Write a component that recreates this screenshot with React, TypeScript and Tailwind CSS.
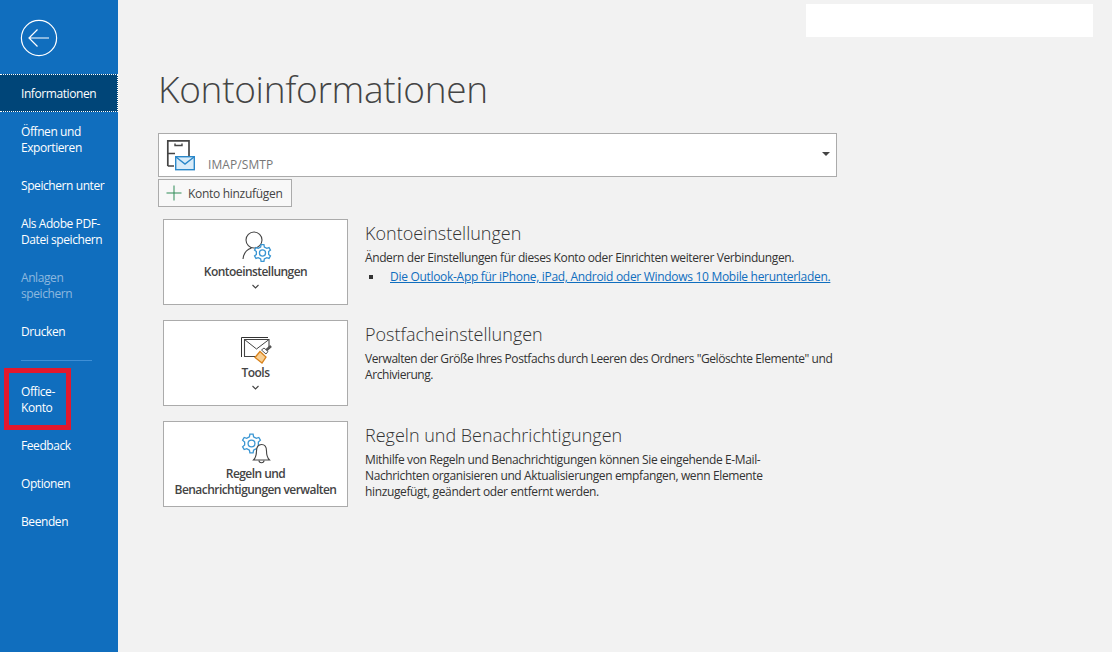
const navFont = "font-['Open_Sans',sans-serif]"

type NavItem = { lines: string[]; active?: boolean; disabled?: boolean }

const topItems: NavItem[] = [
  { lines: ["Informationen"], active: true },
  { lines: ["Öffnen und", "Exportieren"] },
  { lines: ["Speichern unter"] },
  { lines: ["Als Adobe PDF-", "Datei speichern"] },
  { lines: ["Anlagen", "speichern"], disabled: true },
  { lines: ["Drucken"] },
]

const bottomItems: NavItem[] = [
  { lines: ["Office-", "Konto"] },
  { lines: ["Feedback"] },
  { lines: ["Optionen"] },
  { lines: ["Beenden"] },
]

function NavEntry({ item }: { item: NavItem }) {
  return (
    <div
      className={`text-[12px] leading-[16px] tracking-[-0.42px] whitespace-nowrap ${
        item.active
          ? "bg-[#004578] border-y border-r border-dotted border-white pl-[21px] pr-[20px] pt-[11px] pb-[9px]"
          : "px-[21px] pt-[12px] pb-[10px]"
      } ${item.disabled ? "text-[#8db8df]" : "text-white"}`}
    >
      {item.lines.map((l) => (
        <div key={l}>{l}</div>
      ))}
    </div>
  )
}

function BackIcon() {
  return (
    <svg width="38" height="38" viewBox="0 0 38 38" fill="none" stroke="#fff" strokeWidth="1.2">
      <circle cx="19" cy="19" r="17.6" />
      <path d="M9 19H29M17.5 10.5L9 19L17.5 27.5" />
    </svg>
  )
}

function AccountIcon() {
  return (
    <svg width="30" height="34" viewBox="0 0 30 34" fill="none">
      <path d="M1.8 28V2.8H23V18M1.8 15.500H9M1.800 28H8" stroke="#444" strokeWidth="1.7" />
      <path d="M9 5.500V7.500H16V5.500" stroke="#444" strokeWidth="1.4" />
      <rect x="9.700" y="18.700" width="18.600" height="13" fill="#d9ecf9" stroke="#2b88c9" strokeWidth="1.400" />
      <path d="M9.700 18.700L19 26L28.300 18.700" stroke="#2b88c9" strokeWidth="1.400" />
    </svg>
  )
}

// six-tooth cog outline, centred on cx/cy
function gearPath(cx: number, cy: number, outer: number, inner: number) {
  const pts: string[] = []
  for (let i = 0; i < 6; i++) {
    const a = (Math.PI / 3) * i - Math.PI / 2
    const spread = [-0.3, -0.17, 0.17, 0.3]
    const radii = [inner, outer, outer, inner]
    spread.forEach((s, j) => {
      const r = radii[j]
      pts.push(`${(cx + r * Math.cos(a + s)).toFixed(2)} ${(cy + r * Math.sin(a + s)).toFixed(2)}`)
    })
  }
  return `M${pts.join("L")}Z`
}

function Gear({ cx, cy, size }: { cx: number; cy: number; size: number }) {
  return (
    <g stroke="#3a96d3" strokeWidth="1.300" fill="none">
      <path d={gearPath(cx, cy, size, size * 0.74)} />
      <circle cx={cx} cy={cy} r={size * 0.36} />
    </g>
  )
}

function UserGearIcon() {
  return (
    <svg width="32" height="32" viewBox="0 0 32 32" fill="none">
      <circle cx="14" cy="9" r="8" stroke="#444" strokeWidth="1.100" />
      <path d="M3 28C3.500 22.500 7 18.500 11.500 17" stroke="#444" strokeWidth="1.100" />
      <Gear cx={22.500} cy={22} size={8.500} />
    </svg>
  )
}

function ToolsIcon() {
  return (
    <svg width="32" height="28" viewBox="0 0 32 28" fill="none">
      <path d="M1.500 21V1.500H28" stroke="#333" strokeWidth="1" />
      <path d="M17 20.500H4.500V3.500H29V13" stroke="#444" strokeWidth="1.100" />
      <path d="M4.500 3.500L16.500 13L29 3.500" stroke="#444" strokeWidth="1" />
      <path d="M26 14.500L31 10" stroke="#555" strokeWidth="2.600" />
      <path d="M20 15.500L26 21L22 27L15 21.500Z" fill="#f8cf93" stroke="#d8811a" strokeWidth="1.300" />
      <path d="M21.500 14L24 12L28 15.500L26 18Z" fill="#fff" stroke="#555" strokeWidth="1" />
    </svg>
  )
}

function RulesIcon() {
  return (
    <svg width="32" height="34" viewBox="0 0 32 34" fill="none">
      <Gear cx={11.500} cy={12.500} size={9.500} />
      <path d="M13.500 29C15.500 27 16.500 25.500 16.500 20C16.500 16 18.500 13.500 21.500 13.500C24.500 13.500 26.500 16 26.500 20C26.500 25.500 27.500 27 29.500 29Z" fill="#fff" stroke="#444" strokeWidth="1.100" />
      <path d="M19 29.500C19 32.500 24 32.500 24 29.500" stroke="#444" strokeWidth="1.100" />
    </svg>
  )
}

function Chevron() {
  return (
    <svg width="7" height="5" viewBox="0 0 7 5" fill="none" stroke="#444" strokeWidth="1.100">
      <path d="M0.500 1L3.500 4L6.500 1" />
    </svg>
  )
}

function ActionCard({
  icon,
  label,
  chevron,
  children,
}: {
  icon: React.ReactNode
  label: string[]
  chevron?: boolean
  children: React.ReactNode
}) {
  return (
    <div className="flex">
      <div className="w-[185px] h-[86px] shrink-0 bg-white border border-[#ababab] flex flex-col items-center pt-[10px] text-[12px] leading-[16px] tracking-[-0.55px] text-[#444] font-semibold">
        <div className="h-[33px] flex items-end">{icon}</div>
        <div className="text-center whitespace-nowrap mt-[1px]">
          {label.map((l) => (
            <div key={l}>{l}</div>
          ))}
        </div>
        {chevron && (
          <div className="mt-[4px]">
            <Chevron />
          </div>
        )}
      </div>
      <div className="ml-[17px]">{children}</div>
    </div>
  )
}

function CardTitle({ children }: { children: React.ReactNode }) {
  return <div className="text-[18px] leading-[26px] font-light text-[#333] mt-[1px] mb-[4px]">{children}</div>
}

export default function App() {
  return (
    <div className={`${navFont} relative flex h-[652px] w-[1112px] overflow-hidden bg-[#f2f2f2]`}>
      <aside className="w-[118px] shrink-0 bg-[#106ebe]">
        <div className="h-[74px] pl-[20px] pt-[19px]">
          <BackIcon />
        </div>
        {topItems.map((item) => (
          <NavEntry key={item.lines[0]} item={item} />
        ))}
        <div className="ml-[21px] mr-[26px] mt-[10px] mb-[11px] h-px bg-[#3f8fd6]" />
        {bottomItems.map((item) => (
          <NavEntry key={item.lines[0]} item={item} />
        ))}
      </aside>

      <main className="flex-1 pl-[40px]">
        <div className="flex justify-end pt-[4px] pr-[19px]">
          <div className="h-[33px] w-[287px] bg-white" />
        </div>
        <h1 className="text-[37px] leading-[48px] font-light text-[#444] mt-[28px] tracking-[-0.3px]">Kontoinformationen</h1>

        <div className="mt-[20px] w-[679px] h-[44px] bg-white border border-[#ababab] flex">
          <div className="pl-[7px] pt-[4px]">
            <AccountIcon />
          </div>
          <div className="ml-[12px] mt-[23px] text-[12px] leading-[16px] text-[#777] tracking-[0.08px]">IMAP/SMTP</div>
          <div className="ml-auto mr-[6px] mt-[18px] w-0 h-0 border-x-[4px] border-x-transparent border-t-[4px] border-t-[#444]" />
        </div>

        <div className="mt-[2px] w-[134px] h-[28px] bg-[#f8f8f8] border border-[#ababab] flex items-center pl-[7px] text-[12px] text-[#444] tracking-[-0.3px] whitespace-nowrap">
          <svg width="16" height="16" viewBox="0 0 16 16" fill="none" stroke="#2e8b57" strokeWidth="1" className="mr-[6px]">
            <path d="M8 0.500V15.500M0.500 8H15.500" />
          </svg>
          <span className="pt-[2px]">Konto hinzufügen</span>
        </div>

        <div className="ml-[5px] mt-[12px] flex flex-col gap-[15px]">
          <ActionCard icon={<UserGearIcon />} label={["Kontoeinstellungen"]} chevron>
            <CardTitle>Kontoeinstellungen</CardTitle>
            <div className="text-[12px] leading-[16px] text-[#333] tracking-[-0.39px] whitespace-nowrap">
              Ändern der Einstellungen für dieses Konto oder Einrichten weiterer Verbindungen.
            </div>
            <div className="flex items-center mt-[3px] text-[12px] leading-[16px] tracking-[-0.3px] whitespace-nowrap">
              <span className="ml-[4px] mr-[17px] h-[4px] w-[4px] bg-[#333]" />
              <span className="text-[#106ebe] underline">Die Outlook-App für iPhone, iPad, Android oder Windows 10 Mobile herunterladen.</span>
            </div>
          </ActionCard>

          <ActionCard icon={<ToolsIcon />} label={["Tools"]} chevron>
            <CardTitle>Postfacheinstellungen</CardTitle>
            <div className="w-[480px] text-[12px] leading-[16px] text-[#333] tracking-[-0.43px]">
              Verwalten der Größe Ihres Postfachs durch Leeren des Ordners "Gelöschte Elemente" und Archivierung.
            </div>
          </ActionCard>

          <ActionCard icon={<RulesIcon />} label={["Regeln und", "Benachrichtigungen verwalten"]}>
            <CardTitle>Regeln und Benachrichtigungen</CardTitle>
            <div className="w-[420px] text-[12px] leading-[16px] text-[#333] tracking-[-0.37px]">
              Mithilfe von Regeln und Benachrichtigungen können Sie eingehende E-Mail-Nachrichten organisieren und Aktualisierungen empfangen, wenn Elemente hinzugefügt, geändert oder entfernt werden.
            </div>
          </ActionCard>
        </div>
      </main>

      {/* annotation drawn over the sidebar */}
      <div className="absolute left-[4px] top-[368px] h-[62px] w-[67px] border-[5px] border-[#e3182d]" />
    </div>
  )
}
